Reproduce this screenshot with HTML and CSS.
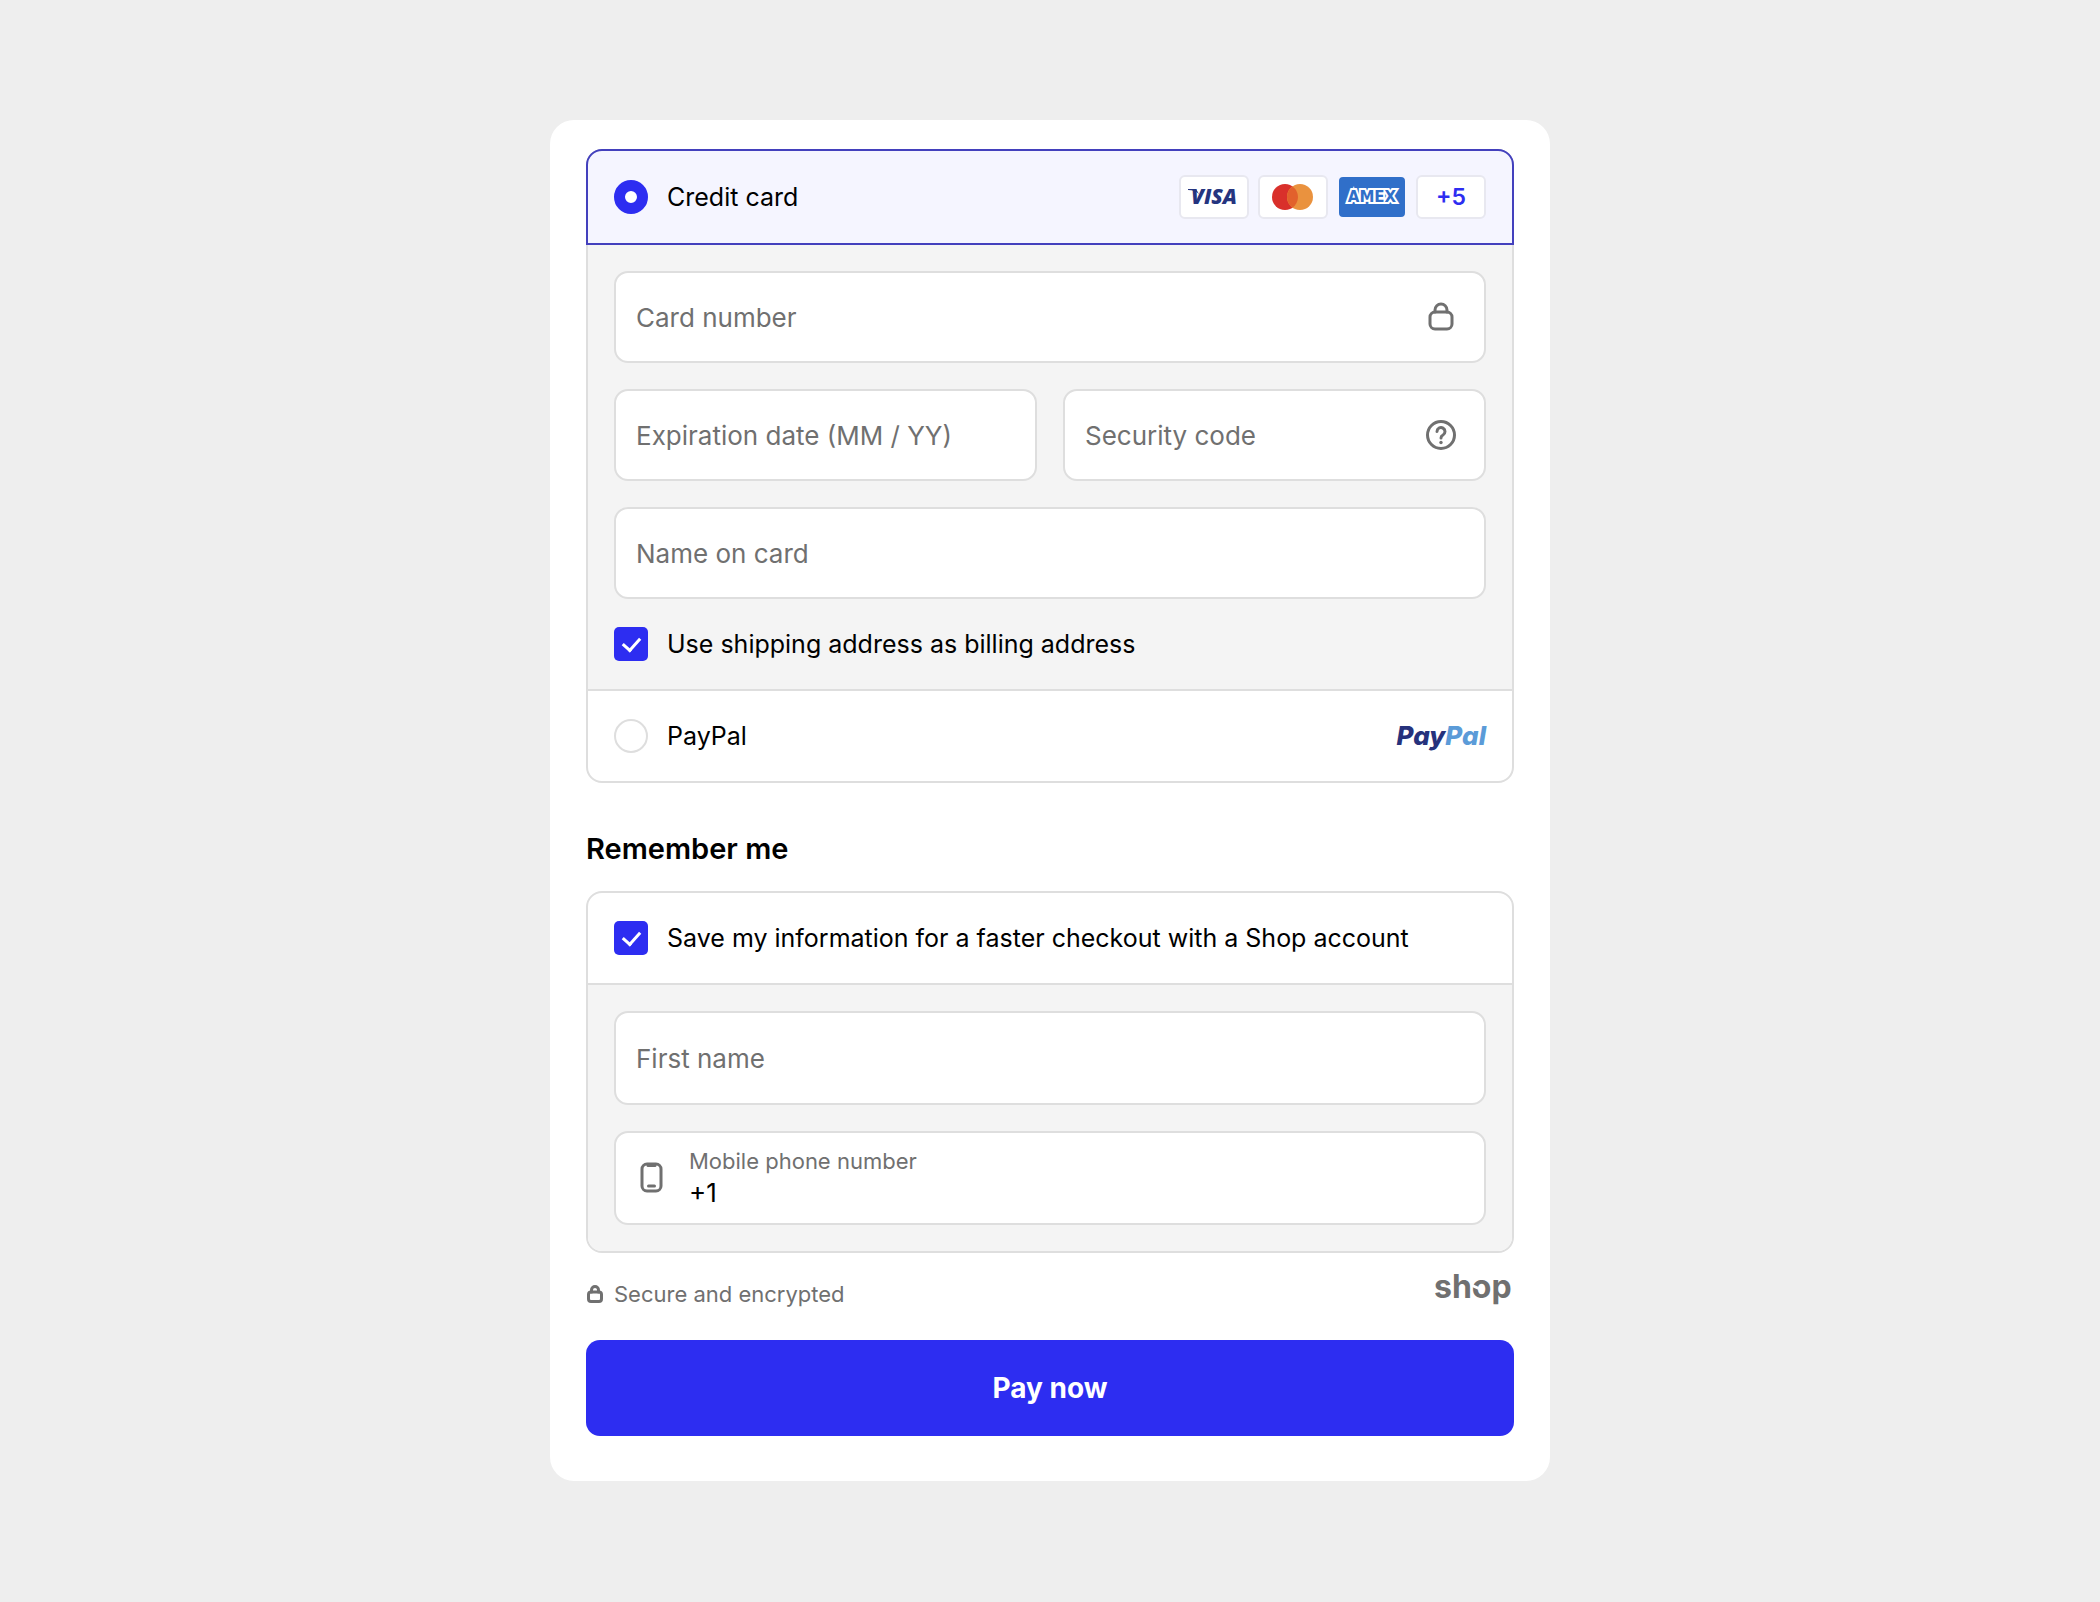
FILE: index.html
```html
<!DOCTYPE html>
<html lang="en">
<head>
    <meta charset="UTF-8">
    <meta name="viewport" content="width=device-width, initial-scale=1.0">
    <title>Checkout</title>
    <link rel="stylesheet" href="styles.css">
</head>
<body>
    <form class="checkout">
        <div class="panel">
            <div class="option option-selected">
                <input id="pay-card" type="radio" name="payment" checked>
                <label for="pay-card">Credit card</label>
                <div class="cards">
                    <span class="card-badge">
                        <svg width="66" height="40" viewBox="0 0 66 40" role="img" aria-label="Visa">
                            <text class="visa-text" x="33" y="27" text-anchor="middle">VISA</text>
                            <path d="M7 12h8l3 5q-4-4-11-4z" fill="#25347f"/>
                        </svg>
                    </span>
                    <span class="card-badge">
                        <svg width="66" height="40" viewBox="0 0 66 40" role="img" aria-label="Mastercard">
                            <circle cx="25" cy="20" r="13" fill="#d9302b"/>
                            <circle cx="40" cy="20" r="13" fill="#ea923e"/>
                            <path d="M32.500 9.400a13 13 0 0 1 0 21.200a13 13 0 0 1 0-21.200z" fill="#e2612c"/>
                        </svg>
                    </span>
                    <span class="card-badge card-amex">
                        <svg width="66" height="40" viewBox="0 0 66 40" role="img" aria-label="Amex">
                            <text class="amex-text" x="33" y="25" text-anchor="middle">AMEX</text>
                        </svg>
                    </span>
                    <button type="button" class="card-badge card-more">+5</button>
                </div>
            </div>
            <div class="panel-body">
                <div class="field">
                    <input type="text" placeholder="Card number" aria-label="Card number">
                    <svg class="icon" width="34" height="34" viewBox="0 0 34 34">
                        <rect x="6" y="12" width="22" height="17" rx="5"/>
                        <path d="M11 12V10a6 6 0 0 1 12 0v2"/>
                    </svg>
                </div>
                <div class="field-row">
                    <div class="field">
                        <input type="text" placeholder="Expiration date (MM / YY)" aria-label="Expiration date (MM / YY)">
                    </div>
                    <div class="field">
                        <input type="text" placeholder="Security code" aria-label="Security code">
                        <svg class="icon" width="34" height="34" viewBox="0 0 34 34">
                            <circle cx="17" cy="17" r="13.500"/>
                            <path d="M13 13.500a4 4 0 1 1 6 3.500q-2 1-2 3"/>
                            <circle class="dot" cx="17" cy="24.500" r="1.700"/>
                        </svg>
                    </div>
                </div>
                <div class="field">
                    <input type="text" placeholder="Name on card" aria-label="Name on card">
                </div>
                <div class="check">
                    <input id="same-address" type="checkbox" checked>
                    <label for="same-address">Use shipping address as billing address</label>
                </div>
            </div>
            <div class="option">
                <input id="pay-paypal" type="radio" name="payment">
                <label for="pay-paypal">PayPal</label>
                <span class="paypal-logo" aria-hidden="true">Pay<span>Pal</span></span>
            </div>
        </div>

        <h2>Remember me</h2>

        <div class="panel">
            <div class="option option-save">
                <input id="save-info" type="checkbox" checked>
                <label for="save-info">Save my information for a faster checkout with a Shop account</label>
            </div>
            <div class="panel-body">
                <div class="field field-tall">
                    <input type="text" placeholder="First name" aria-label="First name">
                </div>
                <div class="field field-tall">
                    <svg class="icon icon-left" width="30" height="34" viewBox="0 0 30 34">
                        <rect x="6" y="3" width="19" height="27" rx="5"/>
                        <path d="M12 4.500h7M12.500 25h6"/>
                    </svg>
                    <div class="field-stack">
                        <label for="phone">Mobile phone number</label>
                        <input id="phone" type="tel" value="+1">
                    </div>
                </div>
            </div>
        </div>

        <div class="secure">
            <svg class="icon" width="18" height="20" viewBox="0 0 18 20">
                <rect x="2.500" y="8" width="13" height="9.500" rx="2.500"/>
                <path d="M5.500 8V6a3.500 3.500 0 0 1 7 0v2"/>
            </svg>
            <span>Secure and encrypted</span>
            <svg class="shop-logo" width="80" height="56" viewBox="0 0 80 56" role="img" aria-label="shop">
                <text x="0" y="32">shop</text>
                <path d="M37 19l9 4" stroke="#fff" stroke-width="3"/>
            </svg>
        </div>

        <button class="pay" type="submit">Pay now</button>
    </form>
</body>
</html>
```

FILE: styles.css
```css
* {
    box-sizing: border-box;
}
body {
    margin: 0;
    padding: 120px 20px;
    background-color: #eeeeee;
    font-family: Inter, "Liberation Sans", sans-serif;
    font-size: 26px;
    color: #000;
}
.checkout {
    max-width: 1000px;
    margin: 0 auto;
    padding: 29px 36px 45px;
    background: #fff;
    border-radius: 24px;
}
input,
button {
    font: inherit;
    color: inherit;
    margin: 0;
}
svg {
    display: block;
    flex: none;
}

/* Panels */
.panel {
    border: 2px solid #dedede;
    border-radius: 16px;
}
.panel-body {
    display: flex;
    flex-direction: column;
    gap: 26px;
    padding: 26px;
    background: #f4f4f4;
    border-radius: 0 0 14px 14px;
}
.option {
    display: flex;
    align-items: center;
    height: 90px;
    padding: 0 26px;
}
.option label,
.check label {
    flex: 1;
    font-size: 25px;
}
.option-selected {
    height: 96px;
    margin: -2px -2px 0;
    border: 2px solid #4340bd;
    border-radius: 16px 16px 0 0;
    background: #f5f5ff;
}
.option-selected + .panel-body {
    border-bottom: 2px solid #dedede;
    border-radius: 0;
}
.option-save {
    height: 92px;
    border-bottom: 2px solid #dedede;
}

/* Radio and checkbox */
input[type="radio"],
input[type="checkbox"] {
    -webkit-appearance: none;
    appearance: none;
    flex: none;
    width: 34px;
    height: 34px;
    margin-right: 19px;
}
input[type="radio"] {
    border: 2px solid #dedede;
    border-radius: 50%;
    background: #fff;
}
input[type="radio"]:checked {
    border: 11px solid #2d2df1;
}
input[type="checkbox"] {
    border-radius: 5px;
    background: #2d2df1;
}
input[type="checkbox"]::before {
    content: "";
    display: block;
    width: 8px;
    height: 14px;
    margin: 7px 0 0 12px;
    border: solid #fff;
    border-width: 0 3px 3px 0;
    transform: rotate(42deg);
}
.check {
    display: flex;
    align-items: center;
    height: 38px;
}

/* Card brands */
.cards {
    display: flex;
    gap: 9px;
}
.card-badge {
    width: 70px;
    height: 44px;
    padding: 0;
    border: 2px solid #e8e8f0;
    border-radius: 6px;
    background: #fff;
}
.card-amex {
    border-color: #f5f5ff;
    background: #306fc9;
}
.card-more {
    color: #2d2df1;
    font-size: 23px;
    font-weight: 600;
}
.visa-text {
    font: italic 800 21px "Open Sans", sans-serif;
    fill: #25347f;
}
.amex-text {
    font: 700 15px "DejaVu Sans", sans-serif;
    fill: #306fc9;
    stroke: #fff;
    stroke-width: 4px;
    paint-order: stroke;
}
.paypal-logo {
    padding-bottom: 2px;
    color: #26327c;
    font: italic 800 26px Inter, sans-serif;
}
.paypal-logo span {
    color: #5b9bd8;
}

/* Fields */
.field {
    display: flex;
    align-items: center;
    height: 92px;
    padding: 0 26px 0 20px;
    border: 2px solid #dedede;
    border-radius: 14px;
    background: #fff;
}
.field-tall {
    height: 94px;
}
.field input {
    flex: 1;
    min-width: 0;
    width: 100%;
    padding: 0;
    border: 0;
    outline: 0;
    background: none;
}
.field input::placeholder {
    color: #707070;
    opacity: 1;
}
.field-row {
    display: grid;
    grid-template-columns: 1fr 1fr;
    gap: 26px;
}
.field-stack {
    flex: 1;
}
.field-stack label {
    display: block;
    color: #707070;
    font-size: 22px;
    line-height: 30px;
}
.field-stack input {
    display: block;
    height: 34px;
    padding-bottom: 2px;
}
.icon {
    fill: none;
    stroke: #707070;
    stroke-width: 3px;
    stroke-linecap: round;
}
.icon .dot {
    fill: #707070;
    stroke: none;
}
.icon-left {
    margin-right: 23px;
}

h2 {
    margin: 48px 0 24px;
    font-size: 29px;
    line-height: 36px;
    font-weight: 600;
}

/* Footer */
.secure {
    display: flex;
    align-items: center;
    gap: 10px;
    height: 87px;
    padding-bottom: 6px;
    color: #707070;
    font-size: 22px;
}
.shop-logo {
    margin-left: auto;
    font: 700 32px Inter, sans-serif;
    fill: #707070;
}
.pay {
    display: block;
    width: 100%;
    height: 96px;
    border: 0;
    border-radius: 14px;
    background: #2d2df1;
    color: #fff;
    font-size: 28px;
    font-weight: 700;
    cursor: pointer;
}
```
